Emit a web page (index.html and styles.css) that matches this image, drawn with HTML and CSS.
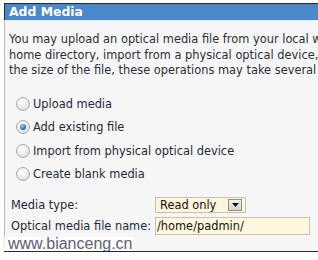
FILE: index.html
```html
<!DOCTYPE html>
<html>
<head>
<meta charset="utf-8">
<link rel="stylesheet" href="styles.css">
</head>
<body>
<div class="panel">
  <div class="header">Add Media</div>
  <div class="body">
    <p class="intro">You may upload an optical media file from your local workstation to your<br>home directory, import from a physical optical device, or create blank media. Depending on<br>the size of the file, these operations may take several minutes to complete.</p>
    <div class="choices">
      <label class="choice"><span class="radio"></span>Upload media</label>
      <label class="choice"><span class="radio checked"></span>Add existing file</label>
      <label class="choice"><span class="radio"></span>Import from physical optical device</label>
      <label class="choice"><span class="radio"></span>Create blank media</label>
    </div>
    <div class="form">
      <div class="row row-select">
        <span class="lbl">Media type:</span>
        <div class="select"><span class="sel-text">Read only</span><span class="sel-btn"><svg width="7" height="4" viewBox="0 0 7 4"><path d="M0 0h7L3.5 4z" fill="#111"/></svg></span></div>
      </div>
      <div class="row row-input">
        <span class="lbl">Optical media file name:</span>
        <input class="field" type="text" value="/home/padmin/">
      </div>
    </div>
  </div>
  <div class="watermark">www.bianceng.cn</div>
</div>
</body>
</html>
```
FILE: styles.css
```css
html, body {
  margin: 0;
  padding: 0;
  background: #ffffff;
  width: 318px;
  height: 260px;
  overflow: hidden;
}
.panel {
  position: relative;
  margin: 3px 0 0 4px;
  width: 314px;
  overflow: hidden;
  border-bottom: 1px solid #2a2a2a;
  font-family: "DejaVu Sans", Verdana, sans-serif;
  font-size: 11.4px;
  color: #1e2a3c;
}
.header {
  height: 16px;
  line-height: 16px;
  background: #4b88ca;
  border-top: 1px solid #1c2a48;
  border-left: 1px solid #1c2a48;
  color: #ffffff;
  font-weight: bold;
  font-size: 12.4px;
  padding-left: 4px;
  white-space: nowrap;
}
.body {
  background: #f6f6f6;
  border-left: 1px solid #b9b9b9;
  border-top: 1px solid #e4e8ee;
  padding: 11px 0 16px 4px;
  height: 231px;
  box-sizing: border-box;
}
.intro {
  margin: 0;
  line-height: 15.5px;
  white-space: nowrap;
  overflow: hidden;
  color: #2a2f3a;
}
.choices {
  margin-top: 13.5px;
  padding-left: 7px;
  display: flex;
  flex-direction: column;
}
.choice {
  height: 23.5px;
  display: flex;
  align-items: center;
  white-space: nowrap;
}
.radio {
  width: 12px;
  height: 12px;
  border-radius: 50%;
  border: 1px solid #a9acb2;
  background: radial-gradient(circle at 40% 35%, #ffffff 0%, #f0f0f0 40%, #cfd1d4 100%);
  margin-right: 3px;
  position: relative;
  flex: none;
}
.radio.checked::after {
  content: "";
  position: absolute;
  left: 3px;
  top: 3px;
  width: 6px;
  height: 6px;
  border-radius: 50%;
  background: radial-gradient(circle at 40% 35%, #9fd0f4 0%, #2c77b8 55%, #143f70 100%);
}
.form {
  margin-top: 9px;
  padding-left: 2px;
  display: flex;
  flex-direction: column;
  gap: 2px;
}
.row {
  display: flex;
  align-items: center;
  white-space: nowrap;
}
.row-select { height: 20px; }
.row-input { height: 18px; }
.lbl {
  width: 144px;
  flex: none;
}
.select {
  width: 91px;
  height: 16px;
  box-sizing: border-box;
  border: 1px solid #c9c2a6;
  background: #fff6dd;
  display: flex;
  align-items: center;
  justify-content: space-between;
  padding-left: 4px;
  padding-right: 3px;
}
.sel-text { line-height: 14px; color: #111; }
.sel-btn {
  width: 14px;
  height: 12px;
  box-sizing: border-box;
  border: 1px solid #8e8e8e;
  background: linear-gradient(#f2f2f2, #d3d3d3);
  display: flex;
  align-items: center;
  justify-content: center;
}
.field {
  width: 155px;
  height: 18px;
  box-sizing: border-box;
  border: 1px solid #c9c2a6;
  background: #fff8de;
  font-family: "DejaVu Sans", Verdana, sans-serif;
  font-size: 11.4px;
  color: #111;
  padding: 0 1px;
  margin: 0;
  outline: none;
}
.watermark {
  position: absolute;
  left: 0;
  top: 234px;
  padding: 0 2px 0 4px;
  height: 14px;
  line-height: 13px;
  background: rgba(255, 255, 255, 0.75);
  border-bottom: 1px solid #c8c8c8;
  font-family: "Liberation Sans", Arial, sans-serif;
  font-size: 16px;
  color: #5a6472;
}
```
